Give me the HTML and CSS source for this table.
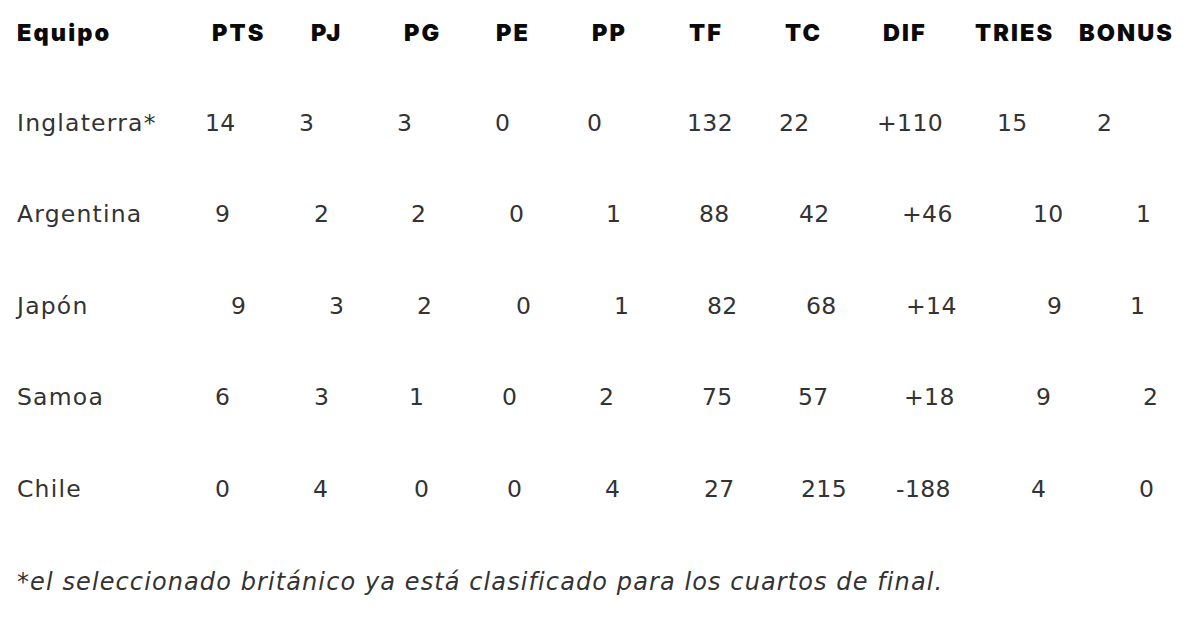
FILE: index.html
```html
<!DOCTYPE html>
<html lang="es">
<head>
<meta charset="utf-8">
<title>Tabla de posiciones</title>
<link rel="stylesheet" href="styles.css">
</head>
<body>
<main class="standings">
  <div class="row head">
    <span>Equipo</span><span>PTS</span><span>PJ</span><span>PG</span><span>PE</span><span>PP</span><span>TF</span><span>TC</span><span>DIF</span><span>TRIES</span><span>BONUS</span>
  </div>
  <div class="row r1">
    <span>Inglaterra*</span><span>14</span><span>3</span><span>3</span><span>0</span><span>0</span><span>132</span><span>22</span><span>+110</span><span>15</span><span>2</span>
  </div>
  <div class="row r2">
    <span>Argentina</span><span>9</span><span>2</span><span>2</span><span>0</span><span>1</span><span>88</span><span>42</span><span>+46</span><span>10</span><span>1</span>
  </div>
  <div class="row r3">
    <span>Japón</span><span>9</span><span>3</span><span>2</span><span>0</span><span>1</span><span>82</span><span>68</span><span>+14</span><span>9</span><span>1</span>
  </div>
  <div class="row r4">
    <span>Samoa</span><span>6</span><span>3</span><span>1</span><span>0</span><span>2</span><span>75</span><span>57</span><span>+18</span><span>9</span><span>2</span>
  </div>
  <div class="row r5">
    <span>Chile</span><span>0</span><span>4</span><span>0</span><span>0</span><span>4</span><span>27</span><span>215</span><span>-188</span><span>4</span><span>0</span>
  </div>
  <p class="note">*el seleccionado británico ya está clasificado para los cuartos de final.</p>
</main>
</body>
</html>
```

FILE: styles.css
```css
html, body {
  margin: 0;
  padding: 0;
  background: #ffffff;
}

.standings {
  display: flex;
  flex-direction: column;
  gap: 45.5px;
  padding: 8px 0 0 17px;
  font-family: "DejaVu Sans", "Noto Sans", sans-serif;
  color: #333333;
}

.row {
  display: grid;
  height: 46px;
  align-items: center;
  white-space: nowrap;
  font-size: 23.5px;
  letter-spacing: 1.2px;
}

.head {
  padding-top: 3px;
  height: 43px;
  font-family: "Inter", "DejaVu Sans", sans-serif;
  font-weight: 900;
  font-size: 23.5px;
  color: #0a0a0a;
  grid-template-columns: 195px 99px 93px 92px 96px 97px 96px 98px 92px 104px 1fr;
}

.r1 { grid-template-columns: 188px 94px 98px 98px 92px 100px 92px 98px 120px 100px 1fr; }
.r2 { grid-template-columns: 198px 99px 97px 98px 97px 93px 100px 103px 131px 103px 1fr; }
.r3 { grid-template-columns: 214px 98px 88px 99px 98px 93px 99px 100px 141px 83px 1fr; }
.r4 { grid-template-columns: 198px 99px 95px 93px 97px 103px 96px 106px 132px 107px 1fr; }
.r5 { grid-template-columns: 198px 98px 101px 93px 98px 99px 97px 95px 135px 108px 1fr; }

.row > span + span {
  letter-spacing: 0.4px;
}

.head > span,
.head > span + span {
  letter-spacing: 2.1px;
}

.note {
  margin: 10px 0 0 0;
  font-size: 24px;
  font-style: italic;
  line-height: 30px;
  letter-spacing: 1.1px;
  color: #333333;
}
```
